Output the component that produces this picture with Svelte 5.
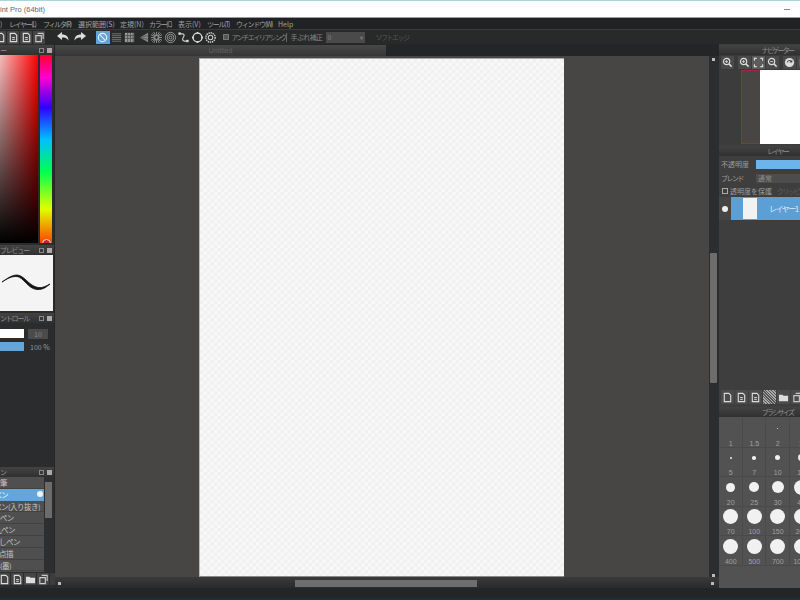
<script>
  const menu = [
    { t: ')', s: 0, w: 9 }, { t: 'レイヤー(L)', s: -1.4, w: 34 }, { t: 'フィルタ(R)', s: -1.3, w: 35 }, { t: '選択範囲(S)', s: 0, w: 42 },
    { t: '定規(N)', s: 0, w: 29 }, { t: 'カラー(C)', s: -1.3, w: 29 }, { t: '表示(V)', s: 0, w: 29 }, { t: 'ツール(T)', s: -1.3, w: 29 },
    { t: 'ウィンドウ(W)', s: -1.2, w: 42 }, { t: 'Help', s: 0, w: 20 }
  ];
  const tools = ['none', 'lines', 'grid', 'fan', 'burst', 'rings', 'curve', 'circle', 'gear'];
  const brushes = [
    { t: '鉛筆', i: -7 }, { t: 'ペン', i: -6, on: true }, { t: 'ペン(入り抜き)', i: -6 }, { t: 'Gペン', i: -5 },
    { t: '丸ペン', i: -6 }, { t: 'ぼかしペン', i: -15 }, { t: '点描', i: -1 }, { t: '水彩(墨)', i: -14 }
  ];
  const sizes = [
    { l: '1', r: 0 }, { l: '1.5', r: 0 }, { l: '2', r: 0.6 }, { l: '3', r: 0.8 },
    { l: '5', r: 1.2 }, { l: '7', r: 1.8 }, { l: '10', r: 2.6 }, { l: '15', r: 3.4 },
    { l: '20', r: 4.4 }, { l: '25', r: 5 }, { l: '30', r: 6 }, { l: '40', r: 7.5 },
    { l: '70', r: 7.4 }, { l: '100', r: 7.4 }, { l: '150', r: 7.4 }, { l: '200', r: 7.4 },
    { l: '400', r: 7.4 }, { l: '500', r: 7.4 }, { l: '700', r: 7.4 }, { l: '1000', r: 7.4 }
  ];
</script>

{#snippet page(fold)}
  <svg viewBox="0 0 12 12" class="ico"><path d="M2.5 1.5h5l2 2v7h-7z" fill="none" stroke="#ddd" stroke-width="1.2"/>{#if fold}<path d="M4.5 6h3M4.5 8h3" stroke="#ddd"/>{/if}</svg>
{/snippet}
{#snippet folder()}
  <svg viewBox="0 0 12 12" class="ico"><path d="M1 3h4l1 1h5v6H1z" fill="#ddd"/></svg>
{/snippet}
{#snippet copy()}
  <svg viewBox="0 0 12 12" class="ico"><path d="M4 1.5h6v6M2 4h6v6.5H2z" fill="none" stroke="#ccc" stroke-width="1.2"/></svg>
{/snippet}
{#snippet zoomIco(sign)}
  <svg viewBox="0 0 12 12" class="ico"><circle cx="5" cy="5" r="3.4" fill="none" stroke="#ddd" stroke-width="1.3"/><path d="M7.5 7.5l3 3" stroke="#ddd" stroke-width="1.6"/><path d="M3.5 5h3" stroke="#ddd"/>{#if sign}<path d="M5 3.5v3" stroke="#ddd"/>{/if}</svg>
{/snippet}
{#snippet head(text, side)}
  <div class="head h-{side}">
    <span class="head-text">{text}</span>
    {#if side === 'l'}
      <span class="head-btns"><i class="float"></i><i class="close"></i></span>
    {/if}
  </div>
{/snippet}
{#snippet tool(name)}
  <svg viewBox="0 0 14 14" class="tool-svg">
    {#if name === 'none'}
      <circle cx="7" cy="7" r="4.5" fill="none" stroke="#e6f2fb" stroke-width="1.2"/><path d="M4 4l6 6" stroke="#e6f2fb" stroke-width="1.2"/>
    {:else if name === 'lines'}
      <path d="M2 3h10M2 5h10M2 7h10M2 9h10M2 11h10" stroke="#777" stroke-width="1"/>
    {:else if name === 'grid'}
      <path d="M2 2h10v10H2z" fill="#999"/><path d="M5 2v10M8 2v10M2 5h10M2 8h10M11 2v10" stroke="#444" stroke-width=".8"/>
    {:else if name === 'fan'}
      <path d="M12 2v10L3 7z" fill="#8a8a8a"/><path d="M12 5L3 7M12 9L3 7" stroke="#444" stroke-width=".7"/>
    {:else if name === 'burst'}
      <path d="M7 1v12M1 7h12M2.5 2.5l9 9M11.5 2.5l-9 9M4 1l6 12M10 1L4 13M1 4l12 6M13 4L1 10" stroke="#bbb" stroke-width=".7"/><circle cx="7" cy="7" r="1.5" fill="#2b2c2d"/>
    {:else if name === 'rings'}
      <circle cx="7" cy="7" r="5.5" fill="none" stroke="#999" stroke-width="1"/><circle cx="7" cy="7" r="3.5" fill="none" stroke="#999" stroke-width="1"/><circle cx="7" cy="7" r="1.5" fill="none" stroke="#999" stroke-width="1"/>
    {:else if name === 'curve'}
      <path d="M3 3h3c2 0 2 2 1 3.5S5 10 8 11h3" fill="none" stroke="#ccc" stroke-width="1.3"/><rect x="1.5" y="1.5" width="2.5" height="2.5" fill="#ddd"/><rect x="10" y="9.5" width="2.5" height="2.5" fill="#ddd"/>
    {:else if name === 'circle'}
      <circle cx="7" cy="7" r="4.8" fill="none" stroke="#ddd" stroke-width="1.4"/><circle cx="7" cy="2" r="1" fill="#ddd"/><circle cx="7" cy="12" r="1" fill="#ddd"/><circle cx="2" cy="7" r="1" fill="#ddd"/><circle cx="12" cy="7" r="1" fill="#ddd"/>
    {:else}
      <circle cx="7" cy="7" r="5" fill="none" stroke="#ccc" stroke-width="1.6" stroke-dasharray="1.5 .8"/><circle cx="7" cy="7" r="2.4" fill="none" stroke="#ccc" stroke-width="1.1"/>
    {/if}
  </svg>
{/snippet}

<div class="app">
  <div class="titlebar">
    <span class="title">int Pro (64bit)</span>
    <span class="min"></span>
  </div>

  <nav class="menu">
    {#each menu as m}<span style="width:{m.w}px;letter-spacing:{m.s}px">{m.t}</span>{/each}
  </nav>

  <div class="toolbar">
    <div class="files">
      <span class="fbtn">{@render page(false)}</span>
      <span class="fbtn">{@render page(true)}</span>
      <span class="fbtn">{@render page(true)}</span>
      <span class="fbtn">{@render copy()}</span>
    </div>
    <div class="history">
      <svg viewBox="0 0 14 12" class="hist"><path d="M6 1L1 5l5 4V6.5c3 0 5 .5 6.5 3C12.5 5.5 10 3.5 6 3.5z" fill="#ddd"/></svg>
      <svg viewBox="0 0 14 12" class="hist"><path d="M8 1l5 4-5 4V6.5c-3 0-5 .5-6.5 3C1.5 5.5 4 3.5 8 3.5z" fill="#ddd"/></svg>
    </div>
    <div class="tools">
      {#each tools as t, i}
        <span class="tbtn" class:sel={i === 0}>{@render tool(t)}</span>
      {/each}
    </div>
    <div class="opts">
      <i class="check dim"></i>
      <span class="kana aa">アンチエイリアシング</span>
      <span class="sep"></span>
      <span class="stab">手ぶれ補正</span>
      <span class="select"><span>0</span><b>▾</b></span>
      <span class="kana faint">ソフトエッジ</span>
    </div>
  </div>

  <div class="body">
    <aside class="left">
      {@render head('ー', 'l')}
      <div class="color">
        <div class="sv"></div>
        <div class="hue"><span class="ring"></span></div>
      </div>
      <div class="gap"></div>
      {@render head('プレビュー', 'l')}
      <div class="preview">
        <svg viewBox="0 0 53 55" class="stroke-svg"><path d="M2 26.5C6 24 11 19.5 17 19.5c7 0 12 11 21 12.500 5 .8 9-2 12-3.500-3 2.500-7 6-13 5.500C28 33.500 24 22 17 21 11 20.500 6 24 2 26.500z" fill="#111" stroke="#111" stroke-width=".8"/></svg>
      </div>
      <div class="gap"></div>
      {@render head('ントロール', 'l')}
      <div class="control">
        <div class="ctl-row"><span class="white"></span><span class="num">10</span></div>
        <div class="ctl-row"><span class="blue"></span><span class="pct">100 %</span></div>
      </div>
      {@render head('ン', 'l')}
      <div class="brushes">
        <ul>
          {#each brushes as b}
            <li class:on={b.on}>
              <span style="margin-left:{b.i}px">{b.t}</span>
              {#if b.on}<i class="cog"></i>{/if}
            </li>
          {/each}
        </ul>
        <div class="list-scroll"><i></i></div>
      </div>
      <div class="brush-tools">
        <span class="fbtn small">{@render page(false)}</span>
        <span class="fbtn small">{@render page(true)}</span>
        <span class="fbtn small">{@render folder()}</span>
        <span class="fbtn small">{@render copy()}</span>
        <span class="fbtn small blank"></span>
      </div>
    </aside>

    <main class="center">
      <div class="tab-row"><div class="tab">Untitled</div></div>
      <div class="work">
        <div class="stage"><div class="canvas"></div></div>
        <div class="vscroll"><i class="dot"></i><i class="thumb"></i><i class="dot end"></i></div>
      </div>
      <div class="hscroll"><i class="dot"></i><i class="hthumb"></i><i class="dot far"></i></div>
    </main>

    <aside class="right">
      {@render head('ナビゲーター', 'r')}
      <div class="nav-tools">
        <span class="nbtn">{@render zoomIco(true)}</span>
        <span class="nbtn gapl">{@render zoomIco(true)}</span>
        <span class="nbtn light"><svg viewBox="0 0 12 12" class="ico"><path d="M1.5 4V1.5H4M8 1.5h2.5V4M10.5 8v2.5H8M4 10.5H1.5V8" fill="none" stroke="#ddd" stroke-width="1.2"/></svg></span>
        <span class="nbtn">{@render zoomIco(false)}</span>
        <span class="nbtn gapl"><svg viewBox="0 0 12 12" class="ico"><circle cx="6" cy="6" r="5" fill="#ddd"/><path d="M3 6a3 3 0 0 1 5-2l1-1v3H6l1-1a2 2 0 0 0-3 1z" fill="#444"/></svg></span>
        <span class="nbtn"><svg viewBox="0 0 12 12" class="ico"><rect x="2" y="2" width="8" height="8" fill="#eee"/></svg></span>
      </div>
      <div class="nav-view">
        <div class="redbox"></div>
        <div class="paper"></div>
      </div>
      {@render head('レイヤー', 'r')}
      <div class="layers">
        <div class="prop"><span class="lbl">不透明度</span><span class="val blueval"></span></div>
        <div class="prop"><span class="lbl kana">ブレンド</span><span class="val">通常</span></div>
        <div class="prop checks"><i class="check"></i><span>透明度を保護</span><span class="clip-txt kana">クリッピング</span></div>
        <div class="layer">
          <span class="eye"><i></i></span>
          <span class="layer-main"><span class="thumb-l"></span><span class="layer-name kana">レイヤー1</span></span>
        </div>
        <div class="layer-space"></div>
        <div class="layer-tools">
          <span class="fbtn mid">{@render page(false)}</span>
          <span class="fbtn mid">{@render page(true)}</span>
          <span class="fbtn mid">{@render page(true)}</span>
          <span class="fbtn mid hatch"></span>
          <span class="fbtn mid">{@render folder()}</span>
          <span class="fbtn mid">{@render copy()}</span>
        </div>
      </div>
      {@render head('ブラシサイズ', 'r')}
      <div class="sizes">
        {#each sizes as s}
          <div class="cell">
            <span class="dotwrap">{#if s.r}<i style="width:{s.r * 2}px;height:{s.r * 2}px"></i>{/if}</span>
            <span class="size-l">{s.l}</span>
          </div>
        {/each}
      </div>
    </aside>
  </div>

  <div class="status"></div>
  <div class="taskbar"></div>
</div>

<style>
  :global(body) { margin: 0; background: #222; }
  .app, .app * { box-sizing: border-box; }
  .app {
    width: 800px; height: 600px; overflow: hidden;
    display: flex; flex-direction: column;
    font-family: "Noto Sans CJK JP", "Noto Sans", sans-serif;
    color: #9a9a9a;
    background: #242526;
  }
  i { display: block; }

  .titlebar {
    flex: 0 0 18px; display: flex; align-items: center; justify-content: space-between;
    background: #fff; border-top: 1px solid #a9d6da; border-bottom: 1px solid #9c9c9c;
  }
  .title { font: 7.5px "Liberation Sans", sans-serif; color: #666; }
  .min { width: 6px; height: 1px; background: #888; margin-right: 10px; }

  .menu {
    flex: 0 0 12px; display: flex; align-items: center; background: #202224; font-size: 7px;
    color: #a0a0a0; white-space: nowrap; border-bottom: 1px solid #3a3b3c;
  }
  .menu span { flex: none; }

  .toolbar { flex: 0 0 14px; display: flex; align-items: center; background: #282929; }
  .files { display: flex; gap: 1px; width: 51px; margin-left: -6px; flex: none; }
  .fbtn { width: 12px; height: 13px; background: #454545; border-radius: 1px; display: flex; align-items: center; justify-content: center; flex: none; }
  .ico { width: 11px; height: 11px; display: block; }
  .history { display: flex; gap: 3px; margin-left: 11px; flex: none; }
  .hist { width: 14px; height: 12px; }
  .tools { display: flex; margin-left: 9px; flex: none; }
  .tbtn { width: 13.5px; height: 13px; display: flex; align-items: center; justify-content: center; flex: none; }
  .tbtn.sel { background: #62a4d8; }
  .tool-svg { width: 13px; height: 13px; }
  .opts { display: flex; align-items: center; margin-left: 4px; font-size: 7px; color: #858585; white-space: nowrap; }
  .kana { letter-spacing: -1.5px; }
  .aa { margin-left: 3px; width: 54px; }
  .stab { margin-left: 4px; width: 32px; letter-spacing: -.6px; }
  .check { width: 6px; height: 6px; border: 1px solid #aaa; flex: none; }
  .check.dim { border-color: #777; background: #555; margin-left: 1px; }
  .sep { width: 1px; height: 9px; background: #666; flex: none; }
  .select { width: 39px; height: 11px; margin-left: 3px; background: #4a4a4a; display: flex; justify-content: space-between; align-items: center; padding: 0 2px; font-size: 7px; }
  .select b { font-size: 6px; color: #777; }
  .faint { color: #555; margin-left: 11px; }

  .body { flex: 1; min-height: 0; display: grid; grid-template-columns: 55px 1fr 81px; }

  .head {
    height: 10px; flex: none; display: flex; align-items: center; justify-content: space-between;
    background: linear-gradient(#434343, #303030); font-size: 7px; color: #8f8f8f; line-height: 10px; overflow: hidden; letter-spacing: -1.2px;
  }
  .h-r { justify-content: center; padding-left: 36px; letter-spacing: -1.7px; }
  .head-btns { display: flex; gap: 3px; margin-right: 2px; align-items: center; }
  .float { width: 5px; height: 5px; border: 1px solid #888; }
  .close { width: 5px; height: 5px; background: #aaa; }

  .left { display: flex; flex-direction: column; background: #2b2c2d; width: 54px; padding-top: 1px; }
  .color { height: 188px; display: flex; flex: none; gap: 2px; }
  .sv {
    width: 38px;
    background: linear-gradient(to bottom, transparent, #000), linear-gradient(to right, #f6bcbc, #ff0000);
  }
  .hue {
    width: 12px; position: relative; overflow: hidden;
    background: linear-gradient(to bottom, #ff0030, #ff00d0 12%, #3000ff 28%, #00c0ff 45%, #00ff50 62%, #e0ff00 82%, #ff4000 100%);
  }
  .ring { position: absolute; left: 1.5px; bottom: -5px; width: 9px; height: 9px; border: 1.5px solid #f4e0e0; border-radius: 50%; background: #c8202a; }
  .gap { height: 2px; flex: none; }
  .preview { height: 56px; width: 53px; flex: none; background: #f4f4f4; }
  .stroke-svg { width: 53px; height: 56px; display: block; }
  .control { height: 144px; flex: none; padding-top: 6px; display: flex; flex-direction: column; gap: 4px; }
  .ctl-row { display: flex; align-items: center; gap: 4px; height: 9px; }
  .white { width: 24px; height: 9px; background: #fff; }
  .blue { width: 24px; height: 9px; background: #64a6da; }
  .num { width: 20px; height: 10px; background: #4b4b4b; font-size: 7px; text-align: center; line-height: 10px; color: #8a8a8a; }
  .pct { font-size: 7px; color: #9a9a9a; margin-left: 2px; white-space: nowrap; }

  .brushes { display: flex; height: 95px; flex: none; }
  ul { margin: 0; padding: 0; list-style: none; width: 44px; background: #4f4f4f; overflow: hidden; flex: none; }
  li { height: 11.8px; font-size: 7.5px; line-height: 11.8px; color: #c4c4c4; white-space: nowrap; position: relative; border-bottom: 1px solid #424242; overflow: hidden; letter-spacing: -.5px; }
  li span { display: inline-block; }
  li.on { background: #64a6da; color: #f4f8fb; border-bottom: 0; }
  .cog { position: absolute; right: 1px; top: 2.5px; width: 6px; height: 6px; border-radius: 50%; background: #eef4fa; }
  .list-scroll { width: 10px; background: #2d2e2f; padding-top: 5px; }
  .list-scroll i { width: 7px; height: 36px; background: #6c6c6c; margin-left: 1px; }
  .brush-tools { display: flex; gap: 1px; padding-top: 1px; margin-left: -2px; }
  .fbtn.small { width: 12px; height: 12px; }
  .fbtn.blank { width: 6px; background: #3d3d3d; }

  .center { display: flex; flex-direction: column; min-width: 0; min-height: 0; }
  .tab-row { flex: 0 0 12px; }
  .tab { width: 331px; height: 11px; margin-top: 1px; text-align: center; font: 7px/11px "Liberation Sans", sans-serif; color: #636363; background: linear-gradient(#484848, #363636); }
  .work { flex: 1; min-height: 0; display: flex; }
  .stage { flex: 1; background: #474645; padding: 2px 0 0 144px; }
  .canvas {
    width: 365px; height: 519px; border-left: 1px solid #bbb; border-top: 1px solid #aaa; border-bottom: 1px solid #8a8a8a;
    background-color: #f8f8f8;
    background-image:
      linear-gradient(45deg, #f0f0f0 25%, transparent 25%, transparent 75%, #f0f0f0 75%),
      linear-gradient(45deg, #f0f0f0 25%, transparent 25%, transparent 75%, #f0f0f0 75%);
    background-size: 7px 7px;
    background-position: 0 0, 3.5px 3.5px;
  }
  .vscroll { width: 10px; flex: none; background: #2c2d2e; position: relative; }
  .vscroll .thumb { position: absolute; left: 1px; top: 197px; width: 7px; height: 130px; background: #6d6d6d; border-radius: 1px; }
  .vscroll .dot { position: absolute; left: 3px; top: 2px; width: 3px; height: 3px; background: #bbb; }
  .vscroll .dot.end { top: auto; bottom: 0; }
  .hscroll { flex: 0 0 11px; background: linear-gradient(#3a3a3a, #2a2b2c); padding: 3px 0 0 240px; position: relative; }
  .hscroll .dot { position: absolute; left: 3px; top: 5px; width: 3px; height: 3px; background: #bbb; }
  .hscroll .dot.far { left: auto; right: 5px; }
  .hthumb { width: 182px; height: 7px; background: #6e6e6e; }

  .right { display: flex; flex-direction: column; background: #3e3e3e; min-height: 0; padding-top: 1px; }
  .nav-tools { height: 15px; flex: none; display: flex; align-items: center; gap: 1px; background: #3a3a3a; padding-left: 2px; }
  .nbtn { width: 13px; height: 13px; background: #4a4a4a; display: flex; align-items: center; justify-content: center; flex: none; }
  .nbtn.gapl { margin-left: 3px; }
  .nbtn.light { background: #5c5c5c; }
  .nav-view { height: 74px; flex: none; background: #3c3c3c; display: flex; padding-left: 22px; margin-bottom: 2px; }
  .redbox { width: 19px; border: 1px solid #a62a35; border-right: 0; background: #474645; }
  .paper { flex: 1; background: #fff; }

  .layers { height: 251px; flex: none; display: flex; flex-direction: column; padding-top: 1px; }
  .prop { height: 14px; flex: none; display: flex; align-items: center; font-size: 7px; white-space: nowrap; padding-left: 2px; color: #9c9c9c; }
  .lbl { width: 35px; flex: none; }
  .val { flex: 1; height: 9px; line-height: 9px; background: #4d4d4d; color: #8c8c8c; padding-left: 2px; }
  .blueval { background: #6db4ea; }
  .checks { gap: 2px; height: 12px; padding-left: 3px; }
  .clip-txt { color: #5f5f5f; margin-left: 3px; }
  .layer { height: 23px; flex: none; display: flex; }
  .eye { width: 12px; flex: none; display: flex; align-items: center; justify-content: center; background: #454545; }
  .eye i { width: 6px; height: 6px; border-radius: 50%; background: #eee; }
  .layer-main { flex: 1; background: #5aa0d6; display: flex; align-items: center; padding-left: 12px; }
  .thumb-l { width: 14px; height: 21px; background: #f2f2f2; flex: none; }
  .layer-name { font-size: 8px; color: #d8e9f6; margin-left: 12px; white-space: nowrap; }
  .layer-space { flex: 1; }
  .layer-tools { display: flex; gap: 1px; padding: 0 0 3px 2px; overflow: hidden; }
  .fbtn.mid { width: 13px; height: 14px; background: #4b4b4b; }
  .hatch { background: repeating-linear-gradient(45deg, #aaa 0 1px, #555 1px 2px) !important; }

  .sizes {
    flex: 1; min-height: 0; display: grid; grid-template-columns: repeat(4, 23.5px); grid-auto-rows: 29.5px;
    background: #525252; padding: 1px 0 0 0; align-content: start;
    overflow: hidden;
  }
  .cell { display: flex; flex-direction: column; align-items: center; justify-content: flex-end; box-shadow: inset -1px -1px 0 #4a4a4a; width: 23.5px; height: 29.5px; }
  .dotwrap { flex: 1; display: flex; align-items: center; justify-content: center; }
  .dotwrap i { background: #f1f1f1; border-radius: 50%; }
  .size-l { font: 7px/9px "Liberation Sans", sans-serif; color: #a0a0a0; white-space: nowrap; }

  .status { flex: 0 0 10px; background: #242526; }
  .taskbar { flex: 0 0 2px; background: #1b2f3e; }
</style>
